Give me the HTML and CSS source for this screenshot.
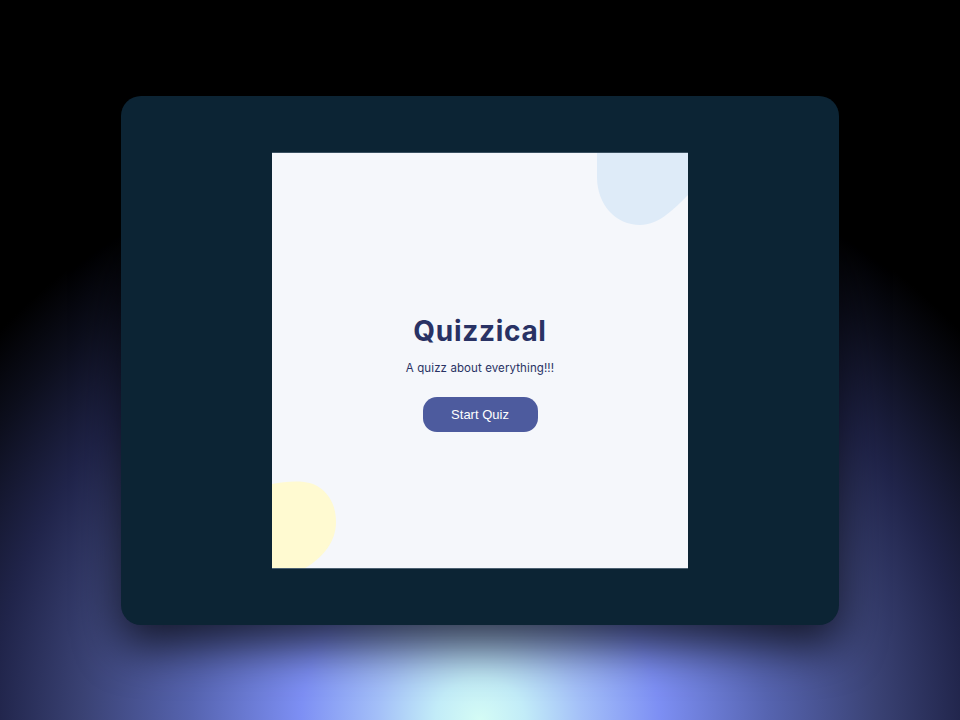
FILE: index.html
```html
<!DOCTYPE html>
<html lang="en">
<head>
<meta charset="utf-8">
<title>Quizzical</title>
<link rel="stylesheet" href="styles.css">
</head>
<body>
<div class="stage">
  <div class="device">
    <main class="panel">
      <svg class="blob blob-blue" viewBox="0 0 416 415" width="416" height="415" aria-hidden="true">
        <path d="M325,0 L325,24 C325,52 344,72 368,72 C386,72 400,58 416,42 L416,0 Z" fill="#deebf8"/>
      </svg>
      <svg class="blob blob-yellow" viewBox="0 0 416 415" width="416" height="415" aria-hidden="true">
        <path d="M0,331 C10,329 22,328 32,329 C51,331 64,347 64,369 C64,388 52,404 33,415 L0,415 Z" fill="#fffad1"/>
      </svg>
      <h1 class="title">Quizzical</h1>
      <p class="subtitle">A quizz about everything!!!</p>
      <button class="start-btn">Start Quiz</button>
    </main>
  </div>
</div>
</body>
</html>
```
FILE: styles.css
```css
html, body {
  margin: 0;
  padding: 0;
  height: 100%;
}
body {
  background: #000;
  background-image: radial-gradient(ellipse 640px 590px at 50% 100%,
    #d4fcf5 0%,
    #c2ecf8 7%,
    #a3bff8 16%,
    #7d8ff4 28%,
    #5664b0 45%,
    #3a4274 62%,
    #20244a 76%,
    #0c0e1c 90%,
    #000 100%);
  font-family: "Open Sans", sans-serif;
}
.stage {
  width: 960px;
  height: 720px;
  display: flex;
  align-items: center;
  justify-content: center;
}
.device {
  width: 718px;
  height: 529px;
  background: #0c2434;
  border-radius: 20px;
  box-shadow: 0 22px 45px rgba(0, 0, 0, 0.7);
  display: flex;
  align-items: center;
  justify-content: center;
}
.panel {
  position: relative;
  width: 416px;
  height: 415px;
  background: #f5f7fb;
  overflow: hidden;
  box-shadow: 0 1px 0 #4b6071, 0 -1px 0 #3a5060;
  display: flex;
  flex-direction: column;
  align-items: center;
  padding-top: 161px;
  box-sizing: border-box;
}
.blob {
  position: absolute;
  left: 0;
  top: 0;
}
.title {
  position: relative;
  margin: 0;
  font-family: "Inter", sans-serif;
  font-weight: 700;
  font-size: 28px;
  line-height: 34px;
  letter-spacing: 0.7px;
  color: #293264;
}
.subtitle {
  position: relative;
  margin: 12px 0 0;
  font-family: "Inter", sans-serif;
  font-size: 11.5px;
  line-height: 16px;
  color: #293264;
  letter-spacing: 0.1px;
}
.start-btn {
  position: relative;
  margin-top: 21px;
  width: 115px;
  height: 35px;
  border: none;
  border-radius: 14px;
  background: #4d5b9e;
  color: #fff;
  font-family: "Liberation Sans", Arial, sans-serif;
  font-size: 13px;
  padding: 0;
}
```
